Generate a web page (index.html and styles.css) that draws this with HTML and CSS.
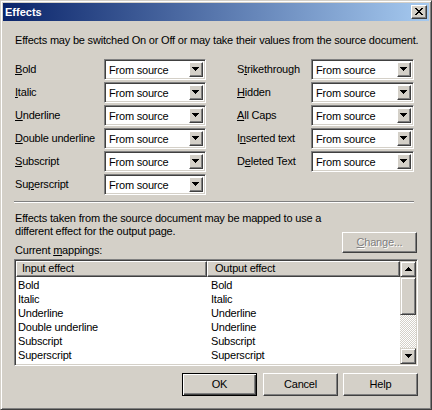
FILE: index.html
```html
<!DOCTYPE html>
<html>
<head>
<meta charset="utf-8">
<title>Effects</title>
<link rel="stylesheet" href="styles.css">
</head>
<body>
<div class="window">
  <div class="titlebar">
    <span class="title">Effects</span>
    <div class="close">
      <svg width="8" height="7" viewBox="0 0 8 7" shape-rendering="crispEdges"><path d="M0 0h2v1h-2zM6 0h2v1h-2zM1 1h2v1h-2zM5 1h2v1h-2zM2 2h4v1h-4zM3 3h2v1h-2zM2 4h4v1h-4zM1 5h2v1h-2zM5 5h2v1h-2zM0 6h2v1h-2zM6 6h2v1h-2z" fill="#000"/></svg>
    </div>
  </div>
  <div class="content">
    <p class="intro">Effects may be switched On or Off or may take their values from the source document.</p>
    <div class="effects">
      <div class="col col-left">
        <span class="lbl"><u>B</u>old</span>
        <div class="combo"><span class="val">From source</span><span class="drop"><svg width="7" height="4" viewBox="0 0 7 4" shape-rendering="crispEdges"><path d="M0 0h7v1h-7zM1 1h5v1h-5zM2 2h3v1h-3zM3 3h1v1h-1z"/></svg></span></div>
        <span class="lbl"><u>I</u>talic</span>
        <div class="combo"><span class="val">From source</span><span class="drop"><svg width="7" height="4" viewBox="0 0 7 4" shape-rendering="crispEdges"><path d="M0 0h7v1h-7zM1 1h5v1h-5zM2 2h3v1h-3zM3 3h1v1h-1z"/></svg></span></div>
        <span class="lbl"><u>U</u>nderline</span>
        <div class="combo"><span class="val">From source</span><span class="drop"><svg width="7" height="4" viewBox="0 0 7 4" shape-rendering="crispEdges"><path d="M0 0h7v1h-7zM1 1h5v1h-5zM2 2h3v1h-3zM3 3h1v1h-1z"/></svg></span></div>
        <span class="lbl"><u>D</u>ouble underline</span>
        <div class="combo"><span class="val">From source</span><span class="drop"><svg width="7" height="4" viewBox="0 0 7 4" shape-rendering="crispEdges"><path d="M0 0h7v1h-7zM1 1h5v1h-5zM2 2h3v1h-3zM3 3h1v1h-1z"/></svg></span></div>
        <span class="lbl"><u>S</u>ubscript</span>
        <div class="combo"><span class="val">From source</span><span class="drop"><svg width="7" height="4" viewBox="0 0 7 4" shape-rendering="crispEdges"><path d="M0 0h7v1h-7zM1 1h5v1h-5zM2 2h3v1h-3zM3 3h1v1h-1z"/></svg></span></div>
        <span class="lbl">Su<u>p</u>erscript</span>
        <div class="combo"><span class="val">From source</span><span class="drop"><svg width="7" height="4" viewBox="0 0 7 4" shape-rendering="crispEdges"><path d="M0 0h7v1h-7zM1 1h5v1h-5zM2 2h3v1h-3zM3 3h1v1h-1z"/></svg></span></div>
      </div>
      <div class="col col-right">
        <span class="lbl">S<u>t</u>rikethrough</span>
        <div class="combo wide"><span class="val">From source</span><span class="drop"><svg width="7" height="4" viewBox="0 0 7 4" shape-rendering="crispEdges"><path d="M0 0h7v1h-7zM1 1h5v1h-5zM2 2h3v1h-3zM3 3h1v1h-1z"/></svg></span></div>
        <span class="lbl"><u>H</u>idden</span>
        <div class="combo wide"><span class="val">From source</span><span class="drop"><svg width="7" height="4" viewBox="0 0 7 4" shape-rendering="crispEdges"><path d="M0 0h7v1h-7zM1 1h5v1h-5zM2 2h3v1h-3zM3 3h1v1h-1z"/></svg></span></div>
        <span class="lbl"><u>A</u>ll Caps</span>
        <div class="combo wide"><span class="val">From source</span><span class="drop"><svg width="7" height="4" viewBox="0 0 7 4" shape-rendering="crispEdges"><path d="M0 0h7v1h-7zM1 1h5v1h-5zM2 2h3v1h-3zM3 3h1v1h-1z"/></svg></span></div>
        <span class="lbl">I<u>n</u>serted text</span>
        <div class="combo wide"><span class="val">From source</span><span class="drop"><svg width="7" height="4" viewBox="0 0 7 4" shape-rendering="crispEdges"><path d="M0 0h7v1h-7zM1 1h5v1h-5zM2 2h3v1h-3zM3 3h1v1h-1z"/></svg></span></div>
        <span class="lbl">D<u>e</u>leted Text</span>
        <div class="combo wide"><span class="val">From source</span><span class="drop"><svg width="7" height="4" viewBox="0 0 7 4" shape-rendering="crispEdges"><path d="M0 0h7v1h-7zM1 1h5v1h-5zM2 2h3v1h-3zM3 3h1v1h-1z"/></svg></span></div>
      </div>
    </div>
    <div class="sep"></div>
    <div class="mapping">
      <div class="mapping-text">
        <p class="para">Effects taken from the source document may be mapped to use a<br>different effect for the output page.</p>
        <p class="current">Current <u>m</u>appings:</p>
      </div>
      <div class="btn disabled"><span><u>C</u>hange...</span></div>
    </div>
    <div class="listbox">
      <div class="list-main">
        <div class="list-head">
          <div class="hcell hcell-in">Input effect</div>
          <div class="hcell hcell-out">Output effect</div>
        </div>
        <div class="row"><span class="c1">Bold</span><span class="c2">Bold</span></div>
        <div class="row"><span class="c1">Italic</span><span class="c2">Italic</span></div>
        <div class="row"><span class="c1">Underline</span><span class="c2">Underline</span></div>
        <div class="row"><span class="c1">Double underline</span><span class="c2">Underline</span></div>
        <div class="row"><span class="c1">Subscript</span><span class="c2">Subscript</span></div>
        <div class="row"><span class="c1">Superscript</span><span class="c2">Superscript</span></div>
      </div>
      <div class="scrollbar">
        <div class="sbtn"><svg width="7" height="4" viewBox="0 0 7 4" shape-rendering="crispEdges"><path d="M3 0h1v1h-1zM2 1h3v1h-3zM1 2h5v1h-5zM0 3h7v1h-7z"/></svg></div>
        <div class="thumb"></div>
        <div class="track"></div>
        <div class="sbtn"><svg width="7" height="4" viewBox="0 0 7 4" shape-rendering="crispEdges"><path d="M0 0h7v1h-7zM1 1h5v1h-5zM2 2h3v1h-3zM3 3h1v1h-1z"/></svg></div>
      </div>
    </div>
    <div class="buttons">
      <div class="btn default"><span>OK</span></div>
      <div class="btn cancel"><span>Cancel</span></div>
      <div class="btn help"><span>Help</span></div>
    </div>
  </div>
</div>
</body>
</html>
```

FILE: styles.css
```css
* { box-sizing: border-box; }
html, body { margin: 0; padding: 0; }
body {
  font-family: "Liberation Sans", Arial, sans-serif;
  font-size: 11px;
  letter-spacing: -0.2px;
  color: #000;
  background: #fff;
}
p { margin: 0; }
u { text-decoration: underline; text-underline-offset: 1px; }

.window {
  width: 432px;
  height: 410px;
  background: #d4d0c8;
  border: 1px solid;
  border-color: #d4d0c8 #404040 #404040 #d4d0c8;
  box-shadow: inset 1px 1px #fff, inset -1px -1px #808080;
  padding: 2px;
  display: flex;
  flex-direction: column;
}

.titlebar {
  height: 18px;
  flex: none;
  display: flex;
  align-items: center;
  justify-content: space-between;
  background: linear-gradient(to right, #0a246a, #a6caf0);
  padding: 0 2px;
}
.title {
  color: #fff;
  font-weight: bold;
  font-size: 11px;
  letter-spacing: 0;
  line-height: 18px;
}
.close {
  width: 16px;
  height: 14px;
  background: #d4d0c8;
  border: 1px solid;
  border-color: #fff #404040 #404040 #fff;
  box-shadow: inset -1px -1px #808080;
  display: flex;
  align-items: center;
  justify-content: center;
  padding: 0 1px 1px 0;
}
.close svg { display: block; }

.content {
  flex: 1;
  padding: 13px 12px 0 12px;
  display: flex;
  flex-direction: column;
}

.intro { line-height: 13px; white-space: nowrap; }

.effects {
  display: flex;
  margin-top: 12px;
}
.col {
  display: grid;
  grid-auto-rows: 21px;
  row-gap: 2px;
  align-items: center;
}
.col-left { grid-template-columns: 89px 102px; }
.col-right { grid-template-columns: 74px 103px; margin-left: 31px; }
.lbl { white-space: nowrap; line-height: 13px; }

.combo {
  height: 21px;
  background: #fff;
  border: 1px solid;
  border-color: #808080 #fff #fff #808080;
  box-shadow: inset 1px 1px #404040, inset -1px -1px #d4d0c8;
  padding: 2px;
  display: flex;
  align-items: stretch;
}
.combo .val {
  flex: 1;
  padding-left: 2px;
  line-height: 17px;
  white-space: nowrap;
}
.drop {
  width: 14px;
  background: #d4d0c8;
  border: 1px solid;
  border-color: #fff #404040 #404040 #fff;
  box-shadow: inset -1px -1px #808080;
  display: flex;
  align-items: center;
  justify-content: center;
  padding: 0 1px 1px 0;
}
.drop svg, .sbtn svg { display: block; fill: #000; }

.sep {
  margin-top: 6px;
  margin-left: -1px;
  width: 400px;
  height: 2px;
  border-top: 1px solid #808080;
  border-bottom: 1px solid #fff;
}

.mapping {
  margin-top: 9px;
  display: flex;
  justify-content: space-between;
}
.para { line-height: 13px; white-space: nowrap; }
.current { margin-top: 6px; line-height: 13px; }

.btn {
  width: 75px;
  height: 23px;
  background: #d4d0c8;
  border: 1px solid;
  border-color: #fff #404040 #404040 #fff;
  box-shadow: inset -1px -1px #808080;
  display: flex;
  align-items: center;
  justify-content: center;
  padding-bottom: 1px;
}
.btn.disabled {
  height: 21px;
  align-self: flex-end;
  margin-bottom: 4px;
  color: #808080;
  text-shadow: 1px 1px #fff;
}
.btn.default {
  border-color: #000;
  box-shadow: inset 1px 1px #fff, inset -1px -1px #404040, inset -2px -2px #808080;
  margin-right: 1px;
}

.listbox {
  margin-top: 2px;
  margin-left: -1px;
  width: 404px;
  height: 107px;
  background: #fff;
  border: 1px solid;
  border-color: #808080 #fff #fff #808080;
  box-shadow: inset 1px 1px #404040, inset -1px -1px #d4d0c8;
  padding: 1px;
  display: flex;
}
.list-main { flex: 1; }
.list-head { display: flex; height: 16px; }
.hcell {
  background: #d4d0c8;
  border: 1px solid;
  border-color: #fff #404040 #404040 #fff;
  box-shadow: inset -1px -1px #808080;
  line-height: 13px;
  white-space: nowrap;
}
.hcell-in { width: 191px; padding-left: 5px; }
.hcell-out { flex: 1; padding-left: 7px; }
.row {
  display: flex;
  height: 14px;
  line-height: 14px;
  white-space: nowrap;
}
.list-head + .row { margin-top: 1px; }
.c1 { width: 191px; padding-left: 2px; }
.c2 { flex: 1; padding-left: 4px; }

.scrollbar {
  width: 16px;
  display: flex;
  flex-direction: column;
}
.sbtn, .thumb {
  background: #d4d0c8;
  border: 1px solid;
  border-color: #d4d0c8 #404040 #404040 #d4d0c8;
  box-shadow: inset 1px 1px #fff, inset -1px -1px #808080;
}
.sbtn {
  height: 16px;
  display: flex;
  align-items: center;
  justify-content: center;
}
.thumb { height: 38px; }
.track {
  flex: 1;
  background: repeating-conic-gradient(#fff 0 25%, #d4d0c8 0 50%) 0 0 / 2px 2px;
}

.buttons {
  margin-top: 7px;
  margin-right: -1px;
  display: flex;
  justify-content: flex-end;
  gap: 5px;
}
```
